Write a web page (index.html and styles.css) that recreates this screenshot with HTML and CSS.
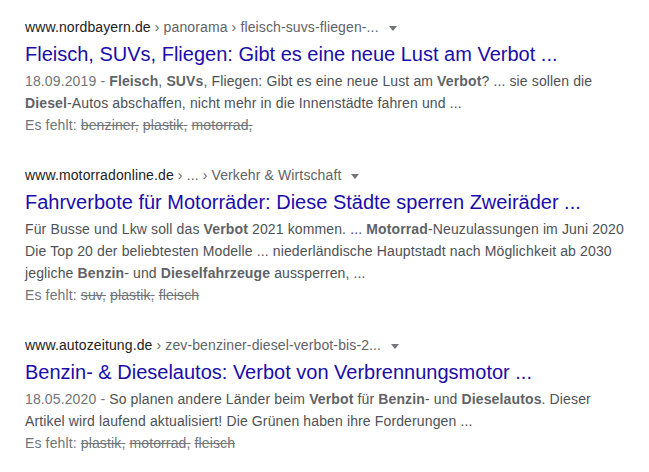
FILE: index.html
```html
<!DOCTYPE html>
<html lang="de">
<head>
  <meta charset="UTF-8">
  <title>Suchergebnisse</title>
  <link rel="stylesheet" href="styles.css">
</head>
<body>

<div class="results">

  <div class="result">
    <div class="url"><span class="host">www.nordbayern.de</span> › panorama › fleisch-suvs-fliegen-... <span class="arrow"></span></div>
    <h3 class="title">Fleisch, SUVs, Fliegen: Gibt es eine neue Lust am Verbot ...</h3>
    <div class="snippet">
      <span class="date">18.09.2019 - </span><b>Fleisch</b>, <b>SUVs</b>, Fliegen: Gibt es eine neue Lust am <b>Verbot</b>? ... sie sollen die<br>
      <b>Diesel</b>-Autos abschaffen, nicht mehr in die Innenstädte fahren und ...
    </div>
    <div class="missing">Es fehlt: <s>benziner</s><s>,</s> <s>plastik</s><s>,</s> <s>motorrad</s><s>,</s></div>
  </div>

  <div class="result">
    <div class="url"><span class="host">www.motorradonline.de</span> › ... › Verkehr &amp; Wirtschaft <span class="arrow"></span></div>
    <h3 class="title">Fahrverbote für Motorräder: Diese Städte sperren Zweiräder ...</h3>
    <div class="snippet">
      Für Busse und Lkw soll das <b>Verbot</b> 2021 kommen. ... <b>Motorrad</b>-Neuzulassungen im Juni 2020<br>
      Die Top 20 der beliebtesten Modelle ... niederländische Hauptstadt nach Möglichkeit ab 2030<br>
      jegliche <b>Benzin</b>- und <b>Dieselfahrzeuge</b> aussperren, ...
    </div>
    <div class="missing">Es fehlt: <s>suv</s><s>,</s> <s>plastik</s><s>,</s> <s>fleisch</s></div>
  </div>

  <div class="result">
    <div class="url"><span class="host">www.autozeitung.de</span> › zev-benziner-diesel-verbot-bis-2... <span class="arrow"></span></div>
    <h3 class="title">Benzin- &amp; Dieselautos: Verbot von Verbrennungsmotor ...</h3>
    <div class="snippet">
      <span class="date">18.05.2020 - </span>So planen andere Länder beim <b>Verbot</b> für <b>Benzin</b>- und <b>Dieselautos</b>. Dieser<br>
      Artikel wird laufend aktualisiert! Die Grünen haben ihre Forderungen ...
    </div>
    <div class="missing">Es fehlt: <s>plastik</s><s>,</s> <s>motorrad</s><s>,</s> <s>fleisch</s></div>
  </div>

</div>

</body>
</html>
```

FILE: styles.css
```css
body {
  margin: 0;
  background: #fff;
  font-family: "Liberation Sans", Arial, sans-serif;
}
.results {
  padding: 18px 0 0 25px;
  width: 610px;
}
.result {
  margin-bottom: 30px;
}
.url {
  font-size: 14px;
  line-height: 18px;
  letter-spacing: 0.12px;
  color: #5f6368;
  white-space: nowrap;
}
.host {
  color: #202124;
}
.arrow {
  display: inline-block;
  margin-left: 6px;
  vertical-align: middle;
  border-left: 4px solid transparent;
  border-right: 4px solid transparent;
  border-top: 5px solid #70757a;
}
.title {
  margin: 5px 0 3px;
  font-size: 20px;
  line-height: 26px;
  font-weight: normal;
  color: #1a0dab;
  white-space: nowrap;
}
.snippet,
.missing {
  font-size: 14px;
  line-height: 22px;
  letter-spacing: 0.13px;
  color: #4d5156;
  white-space: nowrap;
}
.snippet b {
  color: #5f6368;
}
.date,
.missing {
  color: #70757a;
}
.missing s {
  text-decoration-thickness: 1px;
}
```
